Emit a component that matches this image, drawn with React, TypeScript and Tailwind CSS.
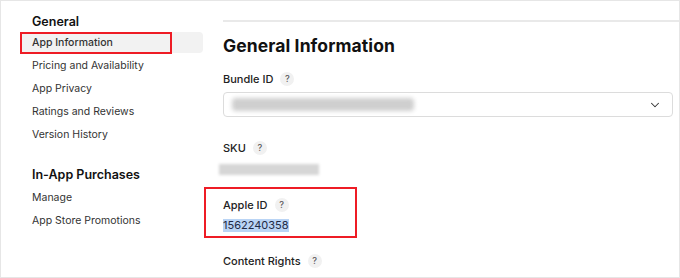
import { ChevronDown } from 'lucide-react';

const font = { fontFamily: 'Inter, "Helvetica Neue", Arial, sans-serif' };

function Help() {
  return (
    <span className="ml-[7px] inline-flex h-[14px] w-[14px] items-center justify-center rounded-full bg-[#f1f1f1] text-[9px] font-medium text-[#555]">
      ?
    </span>
  );
}

function Label({ children }: { children: React.ReactNode }) {
  return (
    <div className="flex h-4 items-center text-[11px] font-medium leading-4 text-[#222]">
      {children}
      <Help />
    </div>
  );
}

function NavItem({ label, active }: { label: string; active?: boolean }) {
  return (
    <div
      className={`relative mb-[2px] flex h-[21px] items-center rounded-[4px] pl-3 text-[10.5px] text-[#333] ${
        active ? 'bg-[#f2f2f2] font-medium text-[#1d1d1f]' : ''
      }`}
    >
      {label}
      {active && (
        <div className="pointer-events-none absolute left-0 top-0 h-[22px] w-[152px] border-2 border-[#ee1c25]" />
      )}
    </div>
  );
}

export default function App() {
  return (
    <div
      className="flex h-[278px] w-[680px] overflow-hidden border border-[#e6e6e6] bg-white"
      style={font}
    >
      {/* Sidebar */}
      <aside className="ml-[19px] w-[183px] shrink-0 pt-[11px]">
        <div className="flex h-5 items-center pl-3 text-[12.5px] font-semibold text-[#111]">General</div>
        <NavItem label="App Information" active />
        <NavItem label="Pricing and Availability" />
        <NavItem label="App Privacy" />
        <NavItem label="Ratings and Reviews" />
        <NavItem label="Version History" />

        <div className="mt-5 mb-[2px] flex h-5 items-center pl-3 text-[12.5px] font-semibold text-[#111]">
          In-App Purchases
        </div>
        <NavItem label="Manage" />
        <NavItem label="App Store Promotions" />
      </aside>

      {/* Main */}
      <main className="ml-5 mt-[19px] flex-1 border-t-2 border-[#e9e9e9]">
        <div className="pr-[6px] pt-3">
          <h1 className="flex h-6 items-center text-[17.5px] font-bold tracking-[0.1px] text-[#111]">General Information</h1>

          <div className="mt-[13px]">
            <Label>Bundle ID</Label>
          </div>
          <div className="mt-[5px] flex h-[25px] items-center justify-between rounded-[4px] border border-[#dcdcdc] pl-2 pr-[10px]">
            <div className="h-[13px] w-[182px] rounded-sm bg-[#cfcfcf] blur-[2px]" />
            <ChevronDown className="h-[14px] w-[14px] text-[#333]" strokeWidth={1.8} />
          </div>

          <div className="mt-[23px]">
            <Label>SKU</Label>
          </div>
          <div className="-ml-1 mt-[8px] h-[11px] w-[100px] bg-[#d6d6d6] blur-[1.5px]" />

          <div className="relative mt-[22px]">
            <div className="pointer-events-none absolute -left-[19px] -top-[10px] h-[51px] w-[153px] border-2 border-[#ee1c25]" />
            <Label>Apple ID</Label>
            <div className="mt-[6px] flex">
              <span className="flex h-[13px] items-center bg-[#b9d4f5] text-[11px] text-[#1f2a44]">1562240358</span>
            </div>
          </div>

          <div className="mt-[21px]">
            <Label>Content Rights</Label>
          </div>
        </div>
      </main>
    </div>
  );
}
